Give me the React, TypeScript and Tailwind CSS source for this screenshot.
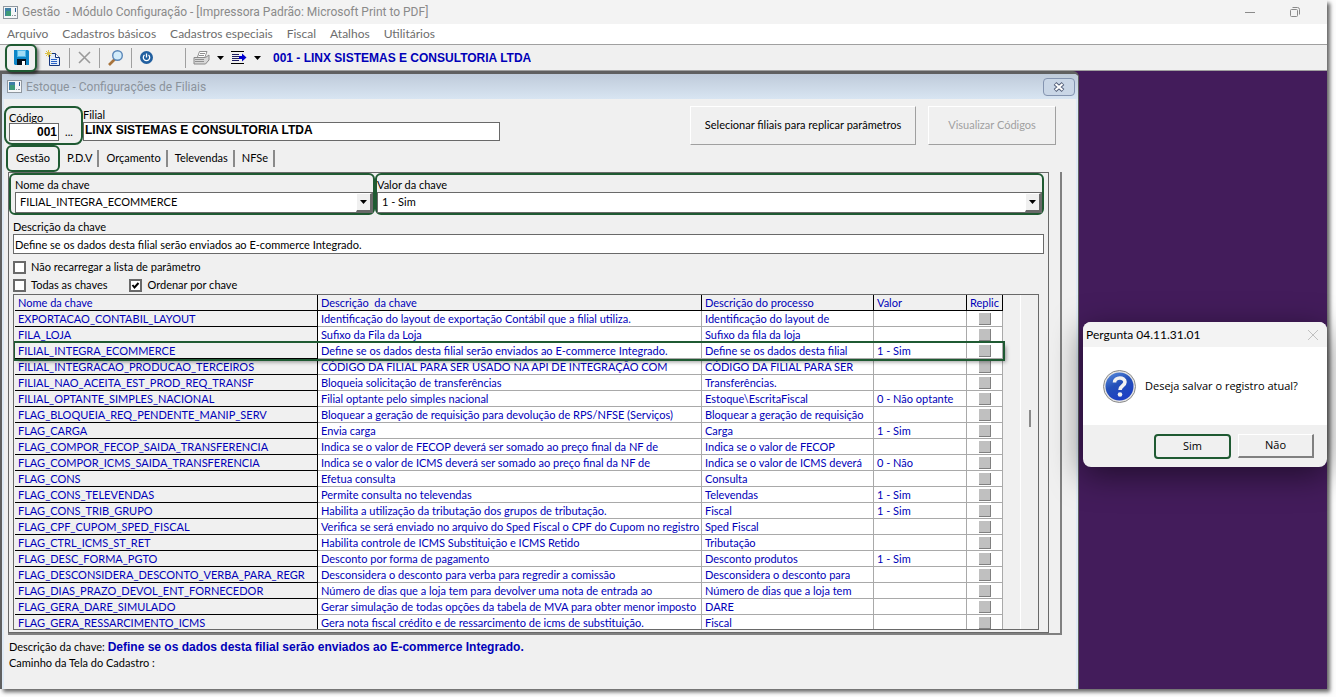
import React, { useState } from 'react';

const rows = [
  { key: 'EXPORTACAO_CONTABIL_LAYOUT', desc: 'Identificação do layout de exportação Contábil que a filial utiliza.', proc: 'Identificação do layout de', valor: '' },
  { key: 'FILA_LOJA', desc: 'Sufixo da Fila da Loja', proc: 'Sufixo da fila da loja', valor: '' },
  { key: 'FILIAL_INTEGRA_ECOMMERCE', desc: 'Define se os dados desta filial serão enviados ao E-commerce Integrado.', proc: 'Define se os dados desta filial', valor: '1 - Sim' },
  { key: 'FILIAL_INTEGRACAO_PRODUCAO_TERCEIROS', desc: 'CÓDIGO DA FILIAL PARA SER USADO NA API DE INTEGRAÇÃO COM', proc: 'CÓDIGO DA FILIAL PARA SER', valor: '' },
  { key: 'FILIAL_NAO_ACEITA_EST_PROD_REQ_TRANSF', desc: 'Bloqueia solicitação de transferências', proc: 'Transferências.', valor: '' },
  { key: 'FILIAL_OPTANTE_SIMPLES_NACIONAL', desc: 'Filial optante pelo simples nacional', proc: 'Estoque\\EscritaFiscal', valor: '0 - Não optante' },
  { key: 'FLAG_BLOQUEIA_REQ_PENDENTE_MANIP_SERV', desc: 'Bloquear a geração de requisição para devolução de RPS/NFSE (Serviços)', proc: 'Bloquear a geração de requisição', valor: '' },
  { key: 'FLAG_CARGA', desc: 'Envia carga', proc: 'Carga', valor: '1 - Sim' },
  { key: 'FLAG_COMPOR_FECOP_SAIDA_TRANSFERENCIA', desc: 'Indica se o valor de FECOP deverá ser somado ao preço final da NF de', proc: 'Indica se o valor de FECOP', valor: '' },
  { key: 'FLAG_COMPOR_ICMS_SAIDA_TRANSFERENCIA', desc: 'Indica se o valor de ICMS deverá ser somado ao preço final da NF de', proc: 'Indica se o valor de ICMS deverá', valor: '0 - Não' },
  { key: 'FLAG_CONS', desc: 'Efetua consulta', proc: 'Consulta', valor: '' },
  { key: 'FLAG_CONS_TELEVENDAS', desc: 'Permite consulta no televendas', proc: 'Televendas', valor: '1 - Sim' },
  { key: 'FLAG_CONS_TRIB_GRUPO', desc: 'Habilita a utilização da tributação dos grupos de tributação.', proc: 'Fiscal', valor: '1 - Sim' },
  { key: 'FLAG_CPF_CUPOM_SPED_FISCAL', desc: 'Verifica se será enviado no arquivo do Sped Fiscal o CPF do Cupom no registro', proc: 'Sped Fiscal', valor: '' },
  { key: 'FLAG_CTRL_ICMS_ST_RET', desc: 'Habilita controle de ICMS Substituição e ICMS Retido', proc: 'Tributação', valor: '' },
  { key: 'FLAG_DESC_FORMA_PGTO', desc: 'Desconto por forma de pagamento', proc: 'Desconto produtos', valor: '1 - Sim' },
  { key: 'FLAG_DESCONSIDERA_DESCONTO_VERBA_PARA_REGR', desc: 'Desconsidera o desconto para verba para regredir a comissão', proc: 'Desconsidera o desconto para', valor: '' },
  { key: 'FLAG_DIAS_PRAZO_DEVOL_ENT_FORNECEDOR', desc: 'Número de dias que a loja tem para devolver uma nota de entrada ao', proc: 'Número de dias que a loja tem', valor: '' },
  { key: 'FLAG_GERA_DARE_SIMULADO', desc: 'Gerar simulação de todas opções da tabela de MVA para obter menor imposto', proc: 'DARE', valor: '' },
  { key: 'FLAG_GERA_RESSARCIMENTO_ICMS', desc: 'Gera nota fiscal crédito e de ressarcimento de icms de substituição.', proc: 'Fiscal', valor: '' },
];

const selectedKey = 'FILIAL_INTEGRA_ECOMMERCE';

const menus = ['Arquivo', 'Cadastros básicos', 'Cadastros especiais', 'Fiscal', 'Atalhos', 'Utilitários'];
const tabs = ['P.D.V', 'Orçamento', 'Televendas', 'NFSe'];

const AppIcon: React.FC = () => (
  <svg width="15" height="13" viewBox="0 0 15 13" className="shrink-0">
    <rect x="0.5" y="0.5" width="14" height="12" fill="#f4f6f8" stroke="#8f979f" />
    <rect x="2" y="2" width="6" height="8" fill="#3f7fa6" />
    <rect x="3" y="5" width="5" height="5" fill="#3f9a78" />
    <rect x="12" y="2" width="1" height="4" fill="#2f5d94" />
    <rect x="9" y="9" width="1" height="1" fill="#8f979f" />
    <rect x="11" y="9" width="2" height="1" fill="#8f979f" />
  </svg>
);

const Caret: React.FC = () => (
  <svg width="7" height="4" viewBox="0 0 7 4" className="shrink-0">
    <path d="M0 0h7L3.500 4z" fill="#000" />
  </svg>
);

const Sep: React.FC = () => <span className="h-5 w-px shrink-0 bg-[#a0a0a0]" />;

interface ComboProps {
  id: string;
  label: string;
  value: string;
}

const Combo: React.FC<ComboProps> = ({ id, label, value }) => (
  <>
    <label htmlFor={id} className="block leading-[15px]">{label}</label>
    <div className="flex h-[21px] border border-[#696969] bg-white">
      <select id={id} defaultValue={value} className="min-w-0 flex-1 appearance-none bg-white px-1 outline-none">
        <option>{value}</option>
      </select>
      <span className="flex w-4 items-center justify-center border-t border-l border-r-2 border-b-2 border-t-white border-l-white border-r-[#696969] border-b-[#696969] bg-[#f0f0f0]">
        <Caret />
      </span>
    </div>
  </>
);

interface CheckProps {
  label: string;
  initial?: boolean;
}

const Check: React.FC<CheckProps> = ({ label, initial = false }) => {
  const [on, setOn] = useState(initial);
  return (
    <label className="flex h-[18px] items-center gap-[5px]">
      <span className="grid h-[13px] w-[13px]">
        <input
          type="checkbox"
          checked={on}
          onChange={(e) => setOn(e.target.checked)}
          className="col-start-1 row-start-1 h-[13px] w-[13px] appearance-none border-2 border-[#696969] bg-white"
        />
        {on && (
          <svg viewBox="0 0 13 13" className="pointer-events-none col-start-1 row-start-1 h-[13px] w-[13px]">
            <path d="M3.500 6l2 2.500 4-4.500" fill="none" stroke="#000" strokeWidth="2" />
          </svg>
        )}
      </span>
      {label}
    </label>
  );
};

const Toolbar: React.FC = () => (
  <div className="flex h-[27px] items-center border-t border-b border-[#a0a0a0] bg-[#f0f0f0] pl-[5px]">
    <button aria-label="Salvar" className="z-10 flex h-7 w-8 shrink-0 items-center justify-center rounded-md border-2 border-[#1f5a32] bg-[#f0f0f0] shadow-[2px_2px_3px_rgba(0,0,0,0.5)]">
      <svg width="15" height="15" viewBox="0 0 15 15">
        <path d="M0 0h14l1 1v14H1l-1-1z" fill="#0d86c8" />
        <rect x="3" y="0" width="9" height="7" fill="#4db8e8" />
        <rect x="4" y="1" width="7" height="5" fill="#9fdcf5" />
        <rect x="3" y="9" width="9" height="6" fill="#06101c" />
        <rect x="8" y="11" width="3" height="4" fill="#fff" />
      </svg>
    </button>
    <button aria-label="Novo" className="ml-2 shrink-0">
      <svg width="16" height="16" viewBox="0 0 16 16">
        <path d="M4.500 3.500h6l4 4v8h-10z" fill="#e3edf8" stroke="#16367c" />
        <path d="M10.500 3.500v4h4" fill="#fff" stroke="#16367c" />
        <path d="M6 9.500h6M6 11.500h6M6 13.500h6" stroke="#2a62c8" />
        <path d="M3.500 0v7M0 3.500h7M1 1l5 5M6 1L1 6" stroke="#dcc24a" />
      </svg>
    </button>
    <span className="ml-2 flex items-center gap-2">
      <Sep />
      <button aria-label="Excluir">
        <svg width="13" height="13" viewBox="0 0 13 13">
          <path d="M1 1l11 11M12 1L1 12" stroke="#9a9a9a" strokeWidth="1.600" />
        </svg>
      </button>
      <Sep />
      <button aria-label="Pesquisar">
        <svg width="15" height="16" viewBox="0 0 15 16">
          <path d="M1 15l6-6" stroke="#a8743c" strokeWidth="2.600" />
          <circle cx="9.500" cy="5.500" r="4.800" fill="#d3ecfa" stroke="#5a86b8" strokeWidth="1.400" />
        </svg>
      </button>
      <Sep />
      <button aria-label="Sair">
        <svg width="13" height="13" viewBox="0 0 13 13">
          <circle cx="6.500" cy="6.500" r="6.500" fill="#215f9f" />
          <path d="M4.500 4a3.200 3.200 0 1 0 4 0M6.500 2.500v4" fill="none" stroke="#fff" strokeWidth="1.300" />
        </svg>
      </button>
    </span>
    <span className="ml-8 flex items-center gap-[7px]">
      <Sep />
      <button aria-label="Imprimir" disabled>
        <svg width="17" height="14" viewBox="0 0 17 14">
          <path d="M4.500 6l2-5.500h7.500L12 6" fill="#fff" stroke="#909090" />
          <path d="M1 6.500h11.500l3.500-2.500v5l-3.500 4H1z" fill="#d8d8d8" stroke="#8a8a8a" />
          <path d="M2 8.500h9M2 10.500h9M7 2.500h5M6 4.500h5" stroke="#909090" />
        </svg>
      </button>
      <Caret />
      <button aria-label="Lista">
        <svg width="16" height="13" viewBox="0 0 16 13">
          <path d="M0 0.500h13M0 12.500h13" stroke="#000" />
          <path d="M1 3.500h7M1 5.500h7M1 7.500h7M1 9.500h7" stroke="#1c1c60" />
          <path d="M8 6.500h4" stroke="#0000d0" strokeWidth="3" />
          <path d="M11 2.500v8l4.500-4z" fill="#0000d0" />
        </svg>
      </button>
      <Caret />
    </span>
    <span className="ml-3 truncate font-['Liberation_Sans',sans-serif] text-xs font-bold text-[#0000b8]">001 - LINX SISTEMAS E CONSULTORIA LTDA</span>
  </div>
);

const KeyGrid: React.FC = () => (
  <div className="flex h-[336px] overflow-hidden border border-[#696969] pl-px">
    <table className="w-full min-w-0 flex-1 table-fixed border-separate border-spacing-0 text-left text-[#0000b8]">
      <colgroup>
        <col className="w-[303px]" />
        <col />
        <col className="w-[172px]" />
        <col className="w-[93px]" />
        <col className="w-9" />
      </colgroup>
      <thead>
        <tr className="h-4 bg-[#f0f0f0] whitespace-pre [&>th]:overflow-hidden [&>th]:border-r [&>th]:border-b [&>th]:border-black [&>th]:px-[3px] [&>th]:py-0 [&>th]:leading-[15px] [&>th]:font-normal">
          <th>Nome da chave</th>
          <th>{'Descrição  da chave'}</th>
          <th>Descrição do processo</th>
          <th>Valor</th>
          <th>Replic</th>
        </tr>
      </thead>
      <tbody>
        {rows.map((r) => (
          <tr
            key={r.key}
            className={`h-4 bg-white whitespace-nowrap [&>td]:overflow-hidden [&>td]:border-r [&>td]:border-b [&>td]:border-[#a9a9a9] [&>td]:px-[3px] [&>td]:py-0 [&>td]:leading-[15px] ${
              r.key === selectedKey ? 'relative z-10 shadow-[3px_3px_4px_rgba(0,0,0,0.4)] outline-2 outline-[#1f5a32]' : ''
            }`}
          >
            <th scope="row" className="overflow-hidden border-r border-b border-black bg-[#f0f0f0] px-[3px] py-0 leading-[15px] font-normal">{r.key}</th>
            <td>{r.desc}</td>
            <td>{r.proc}</td>
            <td>{r.valor}</td>
            <td>
              <button aria-label={`Replicar ${r.key}`} className="mx-auto block h-3 w-3 border-r border-b border-[#808080] bg-[#c0c0c0]" />
            </td>
          </tr>
        ))}
      </tbody>
    </table>
    <div className="flex w-[35px] shrink-0 justify-end">
      <div className="flex w-[18px] justify-center border-l border-white pt-[115px]">
        <div className="h-[17px] w-[2px] bg-[#8a8a8a]" />
      </div>
    </div>
  </div>
);

const BranchWindow: React.FC = () => (
  <section className="flex min-w-0 flex-1 flex-col rounded-tr-md border-t-3 border-r border-l-2 border-[#606060] bg-[#f0f0f0]">
    <header className="flex h-[25px] shrink-0 items-center gap-1 rounded-tr bg-linear-to-b from-[#bfcbda] to-[#d8e5f2] pr-[3px] pl-[5px]">
      <AppIcon />
      <h2 className="flex-1 font-['Roboto',sans-serif] text-xs text-[#8b939c]">Estoque - Configurações de Filiais</h2>
      <button aria-label="Fechar" className="flex h-[18px] w-8 items-center justify-center rounded-sm border border-[#8494b0] bg-[#c9d6e6]">
        <svg width="12" height="10" viewBox="0 0 12 10">
          <path d="M2 1.500l8 7M10 1.500l-8 7" stroke="#54607a" strokeWidth="4" />
          <path d="M2.500 2l7 6M9.500 2l-7 6" stroke="#fff" strokeWidth="2" />
        </svg>
      </button>
    </header>

    <div className="flex flex-1 flex-col border-r-2 border-l-2 border-[#dfeaf5] pr-[14px]">
      <div className="flex items-start pt-[7px]">
        <div className="flex h-[39px] w-[79px] flex-col rounded-lg border-2 border-[#1f5a32] px-[3px] pt-[3px]">
          <label htmlFor="codigo" className="h-3 overflow-hidden leading-[14px]">Código</label>
          <div className="flex gap-px">
            <input id="codigo" defaultValue="001" className="h-[18px] w-[50px] border border-[#696969] bg-white px-px text-right font-['Liberation_Sans',sans-serif] text-xs font-bold outline-none" />
            <button className="h-[18px] flex-1">...</button>
          </div>
        </div>
        <div className="w-[417px] pt-[2px]">
          <label htmlFor="filial" className="block leading-[14px]">Filial</label>
          <input id="filial" defaultValue="LINX SISTEMAS E CONSULTORIA LTDA" className="h-[19px] w-full border border-[#696969] bg-white px-px pb-[3px] font-['Liberation_Sans',sans-serif] text-xs font-bold outline-none" />
        </div>
        <div className="mr-[6px] ml-auto flex gap-3">
          <button className="h-[39px] w-[226px] border border-t-white border-r-[#a0a0a0] border-b-[#a0a0a0] border-l-white">Selecionar filiais para replicar parâmetros</button>
          <button disabled className="h-[39px] w-32 border border-t-white border-r-[#a0a0a0] border-b-[#a0a0a0] border-l-white text-[#a0a0a0]">Visualizar Códigos</button>
        </div>
      </div>

      <nav className="flex h-[27px] items-center pl-[2px]">
        <button className="h-[27px] w-[54px] rounded-md border-2 border-[#1f5a32]">Gestão</button>
        {tabs.map((t) => (
          <button key={t} className="h-[17px] border-r-2 border-[#8a8a8a] pr-[5px] pl-[7px]">{t}</button>
        ))}
      </nav>

      <div className="ml-1 border-r-2 border-b-2 border-[#808080] pr-[11px]">
        <div className="border border-[#696969] pr-1 pb-[2px]">
          <div className="flex">
            <div className="w-[366px] shrink-0 rounded-md border-2 border-[#1f5a32] pt-[2px] pl-1">
              <Combo id="nome" label="Nome da chave" value="FILIAL_INTEGRA_ECOMMERCE" />
            </div>
            <div className="flex-1 rounded-md border-2 border-[#1f5a32] pt-[2px]">
              <Combo id="valor" label="Valor da chave" value="1 - Sim" />
            </div>
          </div>
          <div className="pl-1">
            <label htmlFor="descricao" className="block pt-1 leading-[15px]">Descrição da chave</label>
            <input id="descricao" defaultValue="Define se os dados desta filial serão enviados ao E-commerce Integrado." className="mb-1 block h-5 w-full border border-[#696969] bg-white px-px outline-none" />
            <Check label="Não recarregar a lista de parâmetro" />
            <div className="flex gap-[22px]">
              <Check label="Todas as chaves" />
              <Check label="Ordenar por chave" initial />
            </div>
            <div className="pr-[5px]">
              <KeyGrid />
            </div>
          </div>
        </div>
      </div>

      <footer className="pt-1 pl-[5px] leading-4">
        <p>
          Descrição da chave: <b className="font-['Liberation_Sans',sans-serif] text-xs leading-4 text-[#0000b8]">Define se os dados desta filial serão enviados ao E-commerce Integrado.</b>
        </p>
        <p>Caminho da Tela do Cadastro :</p>
      </footer>
    </div>
  </section>
);

const SaveDialog: React.FC = () => (
  <div role="dialog" aria-label="Pergunta 04.11.31.01" className="overflow-hidden rounded-lg bg-[#f0f0f0] font-['Open_Sans',sans-serif] text-black shadow-[0_8px_32px_rgba(0,0,0,0.5)]">
    <header className="flex h-[25px] items-center justify-between bg-[#f3f3f3] pr-2 pl-[3px] font-['Lato',sans-serif] text-xs">
      <h3>Pergunta 04.11.31.01</h3>
      <button aria-label="Fechar">
        <svg width="12" height="12" viewBox="0 0 12 12">
          <path d="M1 1l10 10M11 1L1 11" stroke="#c0c0c0" />
        </svg>
      </button>
    </header>
    <div className="flex h-[78px] items-center gap-[9px] bg-white pl-5 text-[11px]">
      <svg width="33" height="33" viewBox="0 0 33 33" className="shrink-0">
        <defs>
          <linearGradient id="q" x1="0" y1="0" x2="0.500" y2="1">
            <stop offset="0" stopColor="#5b8fe0" />
            <stop offset="0.500" stopColor="#2450b8" />
            <stop offset="1" stopColor="#1c3fc4" />
          </linearGradient>
        </defs>
        <circle cx="16.500" cy="16.500" r="16" fill="#e4e4e4" stroke="#8a8a8a" />
        <circle cx="16.500" cy="16.500" r="14" fill="url(#q)" />
        <path d="M11.500 12.500c0-6 10.500-6 10.500-.5 0 4-5 3.500-5 8" fill="none" stroke="#f2f2f2" strokeWidth="3.600" />
        <circle cx="17" cy="24.500" r="2.300" fill="#f2f2f2" />
      </svg>
      <p>Deseja salvar o registro atual?</p>
    </div>
    <div className="flex h-[42px] items-center justify-end gap-[7px] pr-[13px] text-[11px]">
      <button className="h-[25px] w-[77px] rounded border-2 border-[#1f5a32]">Sim</button>
      <button className="h-6 w-[76px] border-t border-r-2 border-b-2 border-l border-t-white border-r-[#808080] border-b-[#808080] border-l-white">Não</button>
    </div>
  </div>
);

const App: React.FC = () => (
  <div className="flex min-h-screen flex-col bg-[#fdfdfd] pr-[9px] pb-2 font-['Lato',sans-serif] text-[11px] text-black">
    <div className="flex flex-1 flex-col bg-white shadow-[3px_3px_4px_rgba(0,0,0,0.6)]">
      <header className="flex h-6 items-center gap-1 bg-[#f3f3f3] pr-[26px] pl-[3px] font-['Roboto',sans-serif] text-xs text-[#8a8a8a]">
        <AppIcon />
        <h1 className="flex-1 whitespace-pre">{'Gestão  - Módulo Configuração - [Impressora Padrão: Microsoft Print to PDF]'}</h1>
        <button aria-label="Minimizar" className="mr-[30px]">
          <svg width="11" height="11" viewBox="0 0 11 11">
            <path d="M0 5.500h10" stroke="#8a8a8a" />
          </svg>
        </button>
        <button aria-label="Restaurar">
          <svg width="11" height="11" viewBox="0 0 11 11">
            <rect x="0.500" y="2.500" width="7" height="7" rx="1" fill="none" stroke="#8a8a8a" />
            <path d="M2.500 0.500h5a2 2 0 0 1 2 2v5" fill="none" stroke="#8a8a8a" />
          </svg>
        </button>
      </header>
      <nav className="flex h-5 items-center gap-[14px] bg-white pl-[7px] text-xs text-[#6d6d6d]">
        {menus.map((m) => (
          <button key={m}>{m}</button>
        ))}
      </nav>
      <Toolbar />
      <main className="flex flex-1 bg-[#431c5b]">
        <BranchWindow />
        <aside className="w-[248px] shrink-0 pt-[251px] pl-1">
          <SaveDialog />
        </aside>
      </main>
    </div>
  </div>
);

export default App;
